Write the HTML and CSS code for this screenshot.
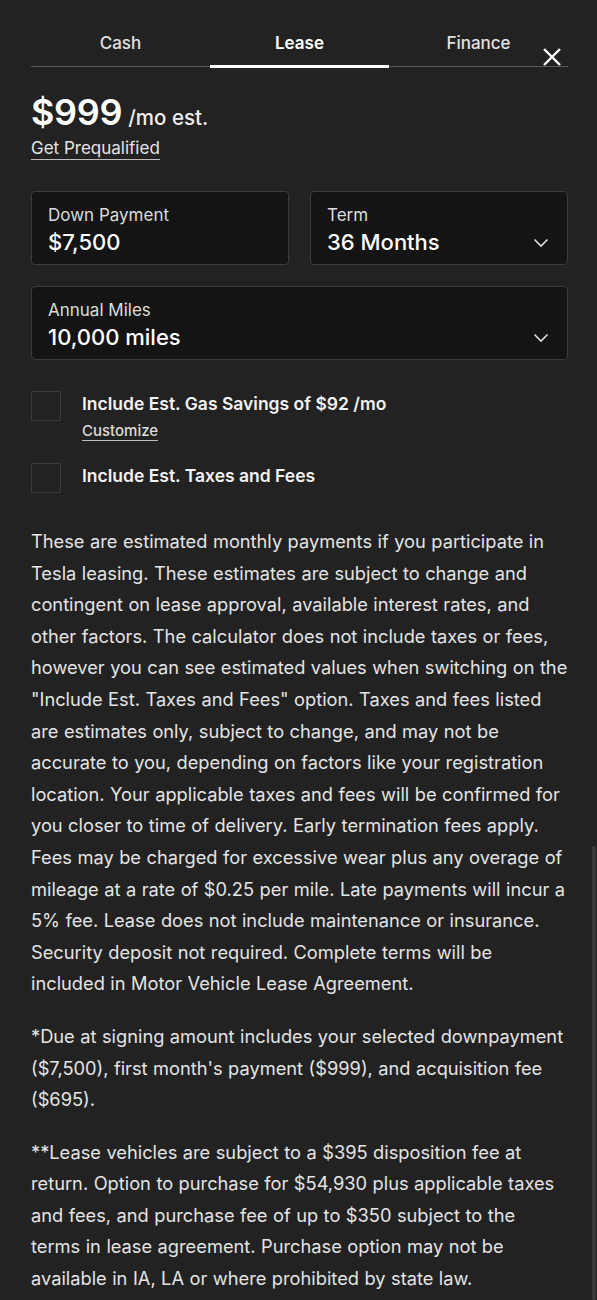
FILE: index.html
```html
<!DOCTYPE html>
<html lang="en">
<head>
<meta charset="utf-8">
<title>Lease</title>
<link rel="stylesheet" href="styles.css">
</head>
<body>
<div class="page">
  <div class="tabs">
    <div class="tab">Cash</div>
    <div class="tab active">Lease</div>
    <div class="tab">Finance</div>
    <button class="close" aria-label="Close">
      <svg width="20" height="20" viewBox="0 0 20 20"><path d="M2 2 L18 18 M18 2 L2 18" stroke="#fff" stroke-width="2.4" fill="none"/></svg>
    </button>
  </div>

  <div class="price"><span class="amount">$999</span><span class="unit">/mo est.</span></div>
  <a class="prequal" href="#">Get Prequalified</a>

  <div class="fields">
    <div class="field">
      <div class="label">Down Payment</div>
      <div class="value">$7,500</div>
    </div>
    <div class="field select">
      <div>
        <div class="label">Term</div>
        <div class="value">36 Months</div>
      </div>
      <svg class="chev" width="16" height="10" viewBox="0 0 16 10"><path d="M1.5 1.5 L8 8 L14.5 1.5" stroke="#ddd" stroke-width="1.6" fill="none"/></svg>
    </div>
    <div class="field select wide">
      <div>
        <div class="label">Annual Miles</div>
        <div class="value">10,000 miles</div>
      </div>
      <svg class="chev" width="16" height="10" viewBox="0 0 16 10"><path d="M1.5 1.5 L8 8 L14.5 1.5" stroke="#ddd" stroke-width="1.6" fill="none"/></svg>
    </div>
  </div>

  <div class="checks">
    <div class="check">
      <span class="box"></span>
      <div class="check-text">
        <div class="check-label">Include Est. Gas Savings of $92 /mo</div>
        <a class="customize" href="#">Customize</a>
      </div>
    </div>
    <div class="check">
      <span class="box"></span>
      <div class="check-text">
        <div class="check-label">Include Est. Taxes and Fees</div>
      </div>
    </div>
  </div>

  <div class="disclaimer">
    <p>These are estimated monthly payments if you participate in Tesla leasing. These estimates are subject to change and contingent on lease approval, available interest rates, and other factors. The calculator does not include taxes or fees, however you can see estimated values when switching on the "Include Est. Taxes and Fees" option. Taxes and fees listed are estimates only, subject to change, and may not be accurate to you, depending on factors like your registration location. Your applicable taxes and fees will be confirmed for you closer to time of delivery. Early termination fees apply. Fees may be charged for excessive wear plus any overage of mileage at a rate of $0.25 per mile. Late payments will incur a 5% fee. Lease does not include maintenance or insurance. Security deposit not required. Complete terms will be included in Motor Vehicle Lease Agreement.</p>
    <p>*Due at signing amount includes your selected downpayment ($7,500), first month's payment ($999), and acquisition fee ($695).</p>
    <p>**Lease vehicles are subject to a $395 disposition fee at return. Option to purchase for $54,930 plus applicable taxes and fees, and purchase fee of up to $350 subject to the terms in lease agreement. Purchase option may not be available in IA, LA or where prohibited by state law.</p>
  </div>
</div>
<div class="scrollbar"></div>
</body>
</html>
```

FILE: styles.css
```css
html, body {
  margin: 0;
  padding: 0;
  background: #222222;
  color: #ffffff;
  font-family: Inter, "Noto Sans", "Liberation Sans", sans-serif;
}

.page {
  padding: 0 29px 0 31px;
}

.tabs {
  position: relative;
  display: flex;
  border-bottom: 1px solid #5a5a5a;
  padding-top: 31px;
}

.tab {
  flex: 1;
  text-align: center;
  font-size: 17px;
  font-weight: 500;
  color: #e2e2e2;
  line-height: 24px;
  padding-bottom: 10px;
  border-bottom: 3px solid transparent;
  margin-bottom: -2px;
}

.tab.active {
  color: #ffffff;
  font-weight: 600;
  border-bottom-color: #ffffff;
}

.close {
  position: absolute;
  right: 6px;
  top: 47px;
  width: 20px;
  height: 20px;
  padding: 0;
  border: 0;
  background: transparent;
}

.close svg { display: block; }

.price {
  margin-top: 25px;
  display: flex;
  align-items: baseline;
  gap: 6px;
}

.amount {
  font-size: 36px;
  font-weight: 600;
  line-height: 40px;
  letter-spacing: -0.3px;
}

.unit {
  font-size: 20.5px;
  font-weight: 500;
  color: #eeeeee;
}

.prequal {
  display: inline-block;
  margin-top: 5px;
  font-size: 17px;
  color: #e4e4e4;
  text-decoration: none;
  border-bottom: 1.5px solid #bdbdbd;
  line-height: 22px;
}

.fields {
  margin-top: 31px;
  display: grid;
  grid-template-columns: 1fr 1fr;
  gap: 21px;
}

.field {
  background: #141414;
  border: 1px solid #3c3c3c;
  border-radius: 4px;
  box-sizing: border-box;
  padding: 12px 16px 0 16px;
  height: 74px;
}

.field.select {
  display: flex;
  justify-content: space-between;
  align-items: flex-start;
}

.field.wide {
  grid-column: 1 / span 2;
}

.chev {
  margin-top: 34px;
  margin-right: 2px;
}

.label {
  font-size: 17px;
  color: #dcdcdc;
  line-height: 22px;
}

.value {
  font-size: 22px;
  font-weight: 500;
  color: #ffffff;
  line-height: 28px;
  margin-top: 2px;
}

.checks {
  margin-top: 31px;
  display: flex;
  flex-direction: column;
  gap: 22px;
}

.check {
  display: flex;
  gap: 21px;
  align-items: flex-start;
}

.box {
  flex: none;
  width: 30px;
  height: 30px;
  box-sizing: border-box;
  border: 1.5px solid #3a3a3a;
  border-radius: 1px;
}

.check-text {
  padding-top: 1px;
}

.check-label {
  font-size: 17.5px;
  font-weight: 600;
  line-height: 24px;
  color: #f2f2f2;
}

.customize {
  display: inline-block;
  margin-top: 6px;
  font-size: 15px;
  font-weight: 500;
  color: #dcdcdc;
  text-decoration: none;
  border-bottom: 1.5px solid #bdbdbd;
  line-height: 18px;
}

.disclaimer {
  margin-top: 33px;
}

.disclaimer p {
  margin: 0 0 21px 0;
  font-size: 18.25px;
  word-spacing: 0.35px;
  line-height: 31.6px;
  color: #e4e4e4;
}

.scrollbar {
  position: fixed;
  right: 1px;
  top: 846px;
  width: 4px;
  height: 454px;
  background: #3a3a3a;
  border-radius: 2px;
}
```
